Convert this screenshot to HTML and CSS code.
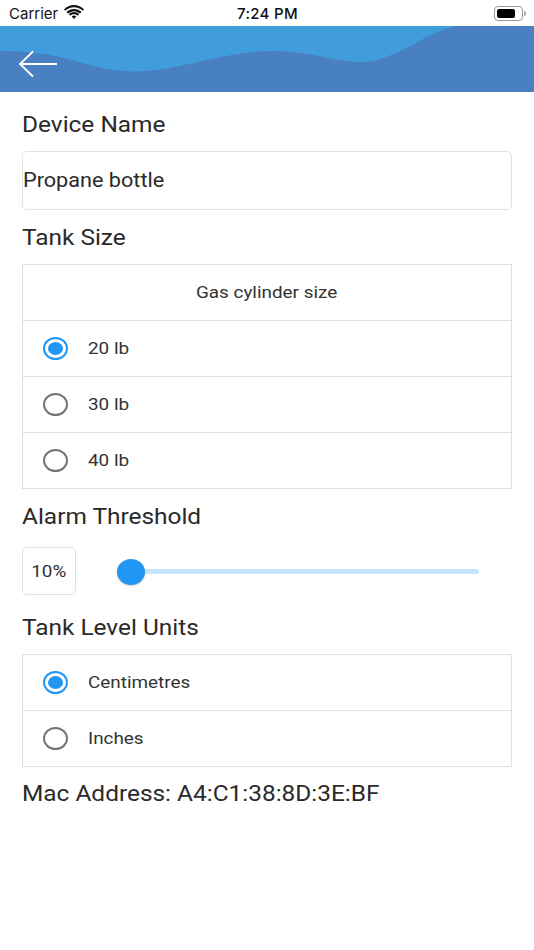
FILE: index.html
```html
<!DOCTYPE html>
<html lang="en">
<head>
<meta charset="utf-8">
<title>Device settings</title>
<link rel="stylesheet" href="styles.css">
</head>
<body>
<div class="status">
  <div class="status-left">
    <span>Carrier</span>
    <svg class="wifi" viewBox="0 0 20 14" width="20" height="14"><path d="M10 2.200c-3.400 0-6.500 1.300-8.800 3.500L0 4.400C2.600 1.700 6.100 0 10 0s7.400 1.700 10 4.400l-1.200 1.300C16.500 3.500 13.400 2.200 10 2.200z M10 6.200c-2.300 0-4.400.9-6 2.400L2.400 7C4.400 5.100 7.100 3.900 10 3.900s5.600 1.200 7.600 3.100L16 8.600c-1.600-1.500-3.700-2.400-6-2.400z M10 9.300c-1.400 0-2.600.5-3.600 1.400L4.800 9.100C6.200 7.800 8 7 10 7s3.800.8 5.200 2.100l-1.600 1.600c-1-.9-2.200-1.400-3.600-1.400z M10 10.600c.9 0 1.700.3 2.400.9L10 14l-2.400-2.500c.7-.6 1.500-.9 2.400-.9z" fill="#111"/></svg>
  </div>
  <div class="status-time">7:24 PM</div>
  <div class="status-right">
    <div class="battery"><div class="battery-fill"></div></div>
    <div class="battery-cap"></div>
  </div>
</div>
<header class="hero">
  <svg class="wave" viewBox="0 0 534 66" preserveAspectRatio="none" width="534" height="66">
    <rect width="534" height="66" fill="#409cda"/>
    <path d="M0 25C20 25 38 26 60 31C85 37 105 45.500 136 45.500C175 45.500 225 25 272 25C310 25 335 36 361 36C395 36 425 6 456 0L534 0L534 66L0 66Z" fill="#4880c2"/>
  </svg>
  <svg class="back" viewBox="0 0 40 28" width="40" height="28"><path d="M39 14H2M15 1.500 2 14l13 12.500" fill="none" stroke="#fff" stroke-width="1.800"/></svg>
</header>
<main class="content">
  <h2 class="label"><span class="t">Device Name</span></h2>
  <div class="input"><span class="t">Propane bottle</span></div>
  <h2 class="label"><span class="t">Tank Size</span></h2>
  <div class="group">
    <div class="row title"><span class="t">Gas cylinder size</span></div>
    <div class="row"><span class="radio on"></span><span class="t">20 lb</span></div>
    <div class="row"><span class="radio"></span><span class="t">30 lb</span></div>
    <div class="row"><span class="radio"></span><span class="t">40 lb</span></div>
  </div>
  <h2 class="label"><span class="t">Alarm Threshold</span></h2>
  <div class="threshold">
    <div class="pct"><span class="t">10%</span></div>
    <div class="slider"><div class="thumb"></div></div>
  </div>
  <h2 class="label"><span class="t">Tank Level Units</span></h2>
  <div class="group units">
    <div class="row"><span class="radio on"></span><span class="t">Centimetres</span></div>
    <div class="row"><span class="radio"></span><span class="t">Inches</span></div>
  </div>
  <h2 class="label"><span class="t">Mac Address: A4:C1:38:8D:3E:BF</span></h2>
</main>
</body>
</html>
```
FILE: styles.css
```css
* { box-sizing: border-box; }
html, body { margin: 0; padding: 0; }
body {
  width: 534px;
  height: 950px;
  background: #fff;
  font-family: Roboto, "Noto Sans", sans-serif;
  color: #222;
  overflow: hidden;
}
.t {
  display: inline-block;
  transform: scaleX(1.11);
  transform-origin: left center;
}
.status {
  height: 26px;
  display: grid;
  grid-template-columns: 1fr auto 1fr;
  align-items: center;
  padding: 0 8px 0 9px;
  font-family: Inter, "Liberation Sans", sans-serif;
  font-size: 15px;
  color: #111;
}
.status-left { display: flex; align-items: center; gap: 6px; }
.wifi { margin-top: -3px; }
.status-time { font-weight: 500; letter-spacing: .3px; }
.status-right { display: flex; justify-content: flex-end; align-items: center; }
.battery {
  width: 29px;
  height: 15px;
  border: 1px solid #999;
  border-radius: 4px;
  padding: 2px;
}
.battery-fill { width: 18px; height: 100%; background: #000; border-radius: 2px; }
.battery-cap { width: 2px; height: 5px; background: #aaa; border-radius: 0 2px 2px 0; margin-left: 1px; }
.hero { position: relative; height: 66px; }
.wave { display: block; }
.back { position: absolute; left: 18px; top: 24px; }
.content { padding: 0 22px; }
.label {
  margin: 0;
  height: 27px;
  display: flex;
  align-items: center;
  font-size: 22px;
  font-weight: 400;
  color: #2a2a2a;
  white-space: nowrap;
}
.content > .label:first-child { margin-top: 19px; margin-bottom: 13px; }
.input {
  height: 59px;
  border: 1px solid #e2e2e2;
  border-radius: 5px;
  display: flex;
  align-items: center;
  padding: 0;
  font-size: 19.500px;
  color: #2a2a2a;
  margin-bottom: 14px;
}
.input + .label { margin-bottom: 13px; }
.group { border: 1px solid #e0e0e0; margin-bottom: 14px; }
.group + .label { margin-bottom: 17px; }
.group.units { margin-bottom: 13px; }
.row {
  height: 56px;
  display: flex;
  align-items: center;
  gap: 20px;
  padding: 0 0 2px 20px;
  font-size: 17px;
  border-bottom: 1px solid #e0e0e0;
  color: #333;
}
.row:last-child { border-bottom: 0; height: 55px; }
.row.title { justify-content: center; padding-left: 0; }
.row.title .t { transform-origin: center; }
.radio {
  width: 25px;
  height: 23px;
  border: 2.500px solid #757575;
  border-radius: 50%;
  display: block;
  position: relative;
  margin-top: 2px;
}
.radio.on { border-color: #2196f3; }
.radio.on::after {
  content: "";
  position: absolute;
  inset: 3px;
  background: #2196f3;
  border-radius: 50%;
}
.threshold { display: flex; align-items: center; height: 48px; margin-bottom: 19px; }
.pct {
  width: 54px;
  height: 48px;
  border: 1px solid #e2e2e2;
  border-radius: 5px;
  display: flex;
  align-items: center;
  justify-content: center;
  font-size: 17px;
  color: #333;
}
.pct .t { transform-origin: center; }
.slider {
  position: relative;
  width: 362px;
  height: 5px;
  margin-left: 41px;
  background: #c6e4fc;
  border-radius: 3px;
}
.thumb {
  position: absolute;
  left: 0;
  top: -10px;
  width: 28px;
  height: 26px;
  background: #2196f3;
  border-radius: 50%;
  box-shadow: 0 1px 2px rgba(0,0,0,.2);
}
.threshold + .label { margin-bottom: 13px; }
```
